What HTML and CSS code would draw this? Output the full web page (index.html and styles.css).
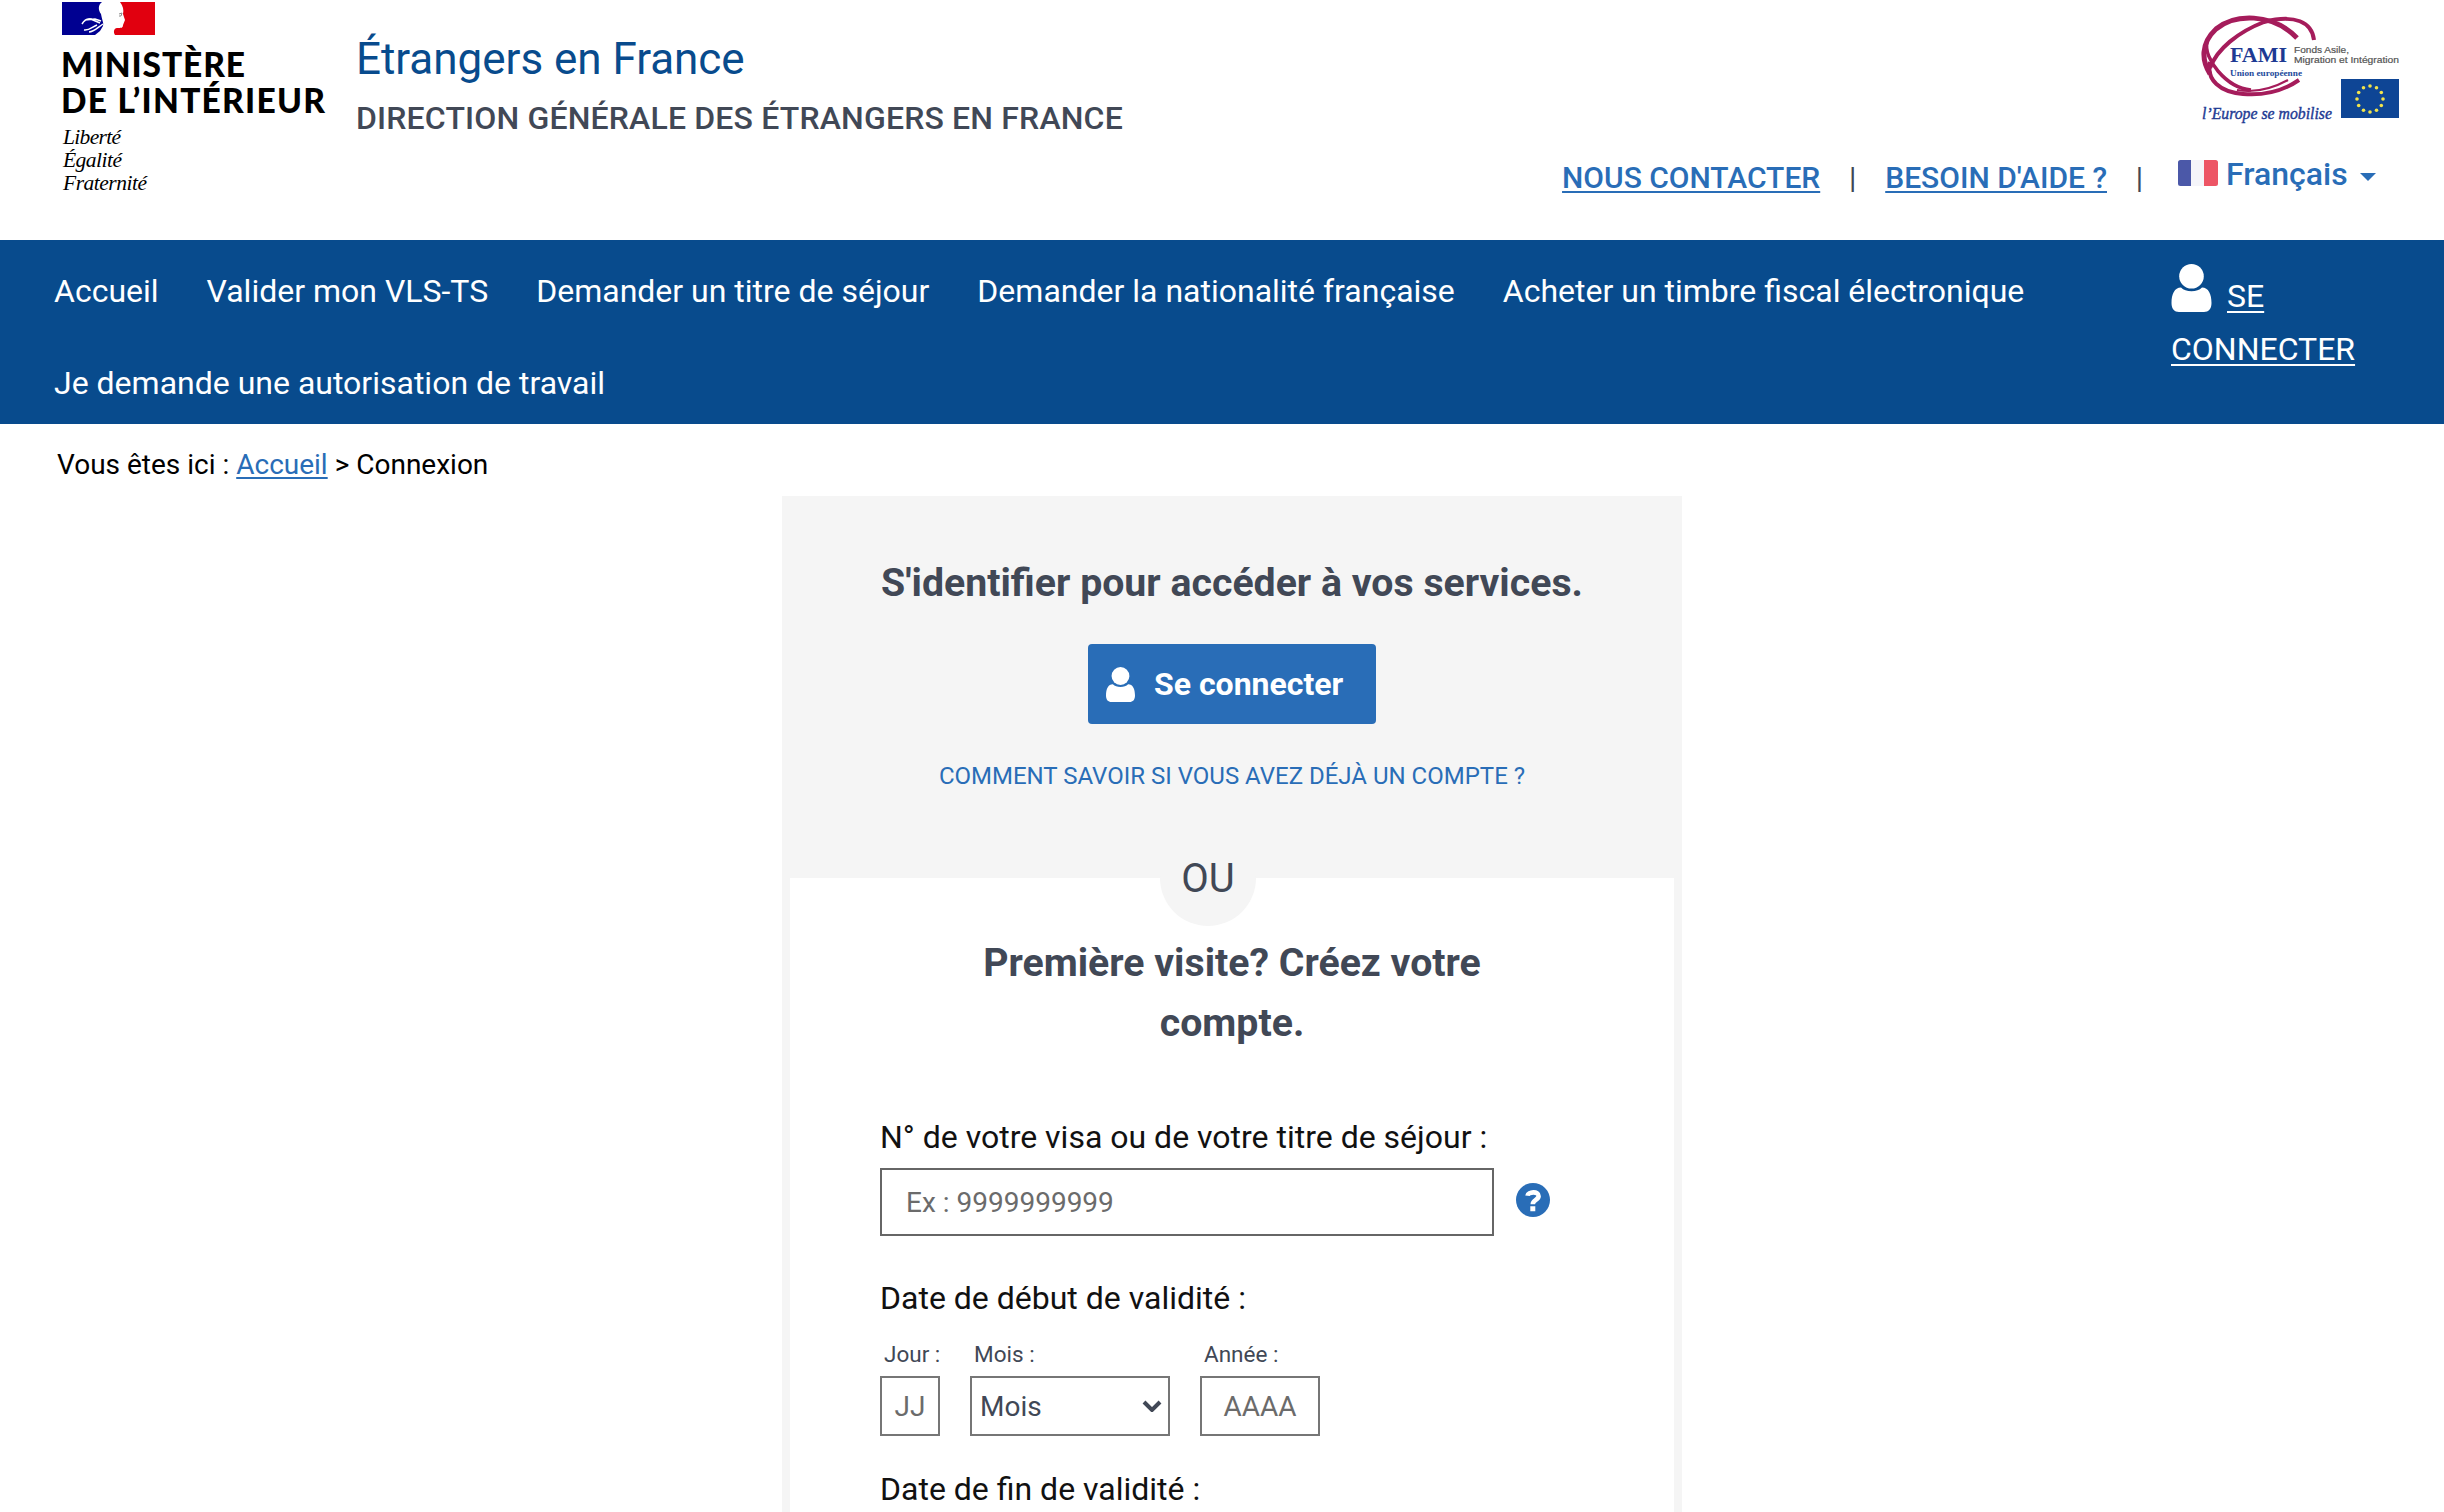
FILE: index.html
```html
<!DOCTYPE html>
<html lang="fr">
<head>
<meta charset="utf-8">
<title>Étrangers en France - Connexion</title>
<link rel="stylesheet" href="styles.css">
</head>
<body>
<svg class="sprite" aria-hidden="true">
  <symbol id="user" viewBox="0 0 40 48">
    <path d="M9.5 23.5C3 23.5 0 30 0 39c0 6 3 9 7.500 9h25c4.500 0 7.500-3 7.500-9 0-9-3-15.500-9.500-15.500C28 26 24.500 27.300 20 27.300S12 26 9.500 23.500z"/>
    <circle cx="20" cy="12.300" r="12.300"/>
  </symbol>
</svg>
<header class="header">
  <svg class="ministry" viewBox="0 0 270 200" role="img" aria-label="Ministère de l'Intérieur">
    <path fill="#000091" d="M0 2h40c-4 3-4 8-1 12 1 6 3 9 2 12l-3 5-5 4H0z"/>
    <path fill="#e1000f" d="M58 2h35v33H53c-2-3-1-7 2-7 4 0 6 0 6-3l2-5-2-6c1-4 0-8-3-12z"/>
    <path fill="none" stroke="#fff" stroke-width="1.500" d="M20 24c3-5 7-6 11-4l7 3M23 20l10-1 6 2M22 30c5 1 8-3 13-5M27 32c5 0 8-4 14-8"/>
    <path fill="none" stroke="#8a8a8a" d="M57 14l3-1-1 3h-2"/>
    <g class="ministry-name">
      <text x="-1" y="76.500" textLength="184">MINISTÈRE</text>
      <text x="-1" y="113" textLength="264">DE L’INTÉRIEUR</text>
    </g>
    <g class="motto">
      <text x="1" y="144" textLength="58">Liberté</text>
      <text x="1" y="167" textLength="59">Égalité</text>
      <text x="1" y="190" textLength="84">Fraternité</text>
    </g>
  </svg>
  <div class="titles">
    <div class="site">Étrangers en France</div>
    <div class="dept">DIRECTION GÉNÉRALE DES ÉTRANGERS EN FRANCE</div>
  </div>
  <div class="tools">
    <svg class="fami" viewBox="0 0 198 118" role="img" aria-label="FAMI Union européenne">
      <g fill="none" stroke="#a51c5b">
        <path stroke-width="5" d="M95 32C70 6 32 8 14 23C-2 38 0 55 8 68"/>
        <path stroke-width="4" d="M8 62C15 43 36 26 62 16C93 8 110 16 112 34"/>
        <path stroke-width="3.500" d="M5 36C1 52 24 82 49 84"/>
        <path stroke-width="4" d="M8 56C4 74 18 86 41 88C65 90 84 83 97 74"/>
        <path stroke-width="2" d="M35 84C57 88 75 80 86 74"/>
      </g>
      <text class="fami-name" x="28" y="56" textLength="57" lengthAdjust="spacingAndGlyphs">FAMI</text>
      <text class="fami-union" x="28" y="70" textLength="72" lengthAdjust="spacingAndGlyphs">Union européenne</text>
      <text class="fami-fund" x="92" y="46.500" textLength="55" lengthAdjust="spacingAndGlyphs">Fonds Asile,</text>
      <text class="fami-fund" x="92" y="56.500" textLength="105" lengthAdjust="spacingAndGlyphs">Migration et Intégration</text>
      <text class="fami-hand" x="0" y="112.500" textLength="130" lengthAdjust="spacingAndGlyphs">l’Europe se mobilise</text>
      <path fill="#0e4595" d="M139 73h58v39h-58z"/>
      <g fill="#f2e34c">
        <circle cx="168" cy="80" r="1.800"/><circle cx="174.500" cy="81.700" r="1.800"/><circle cx="179.300" cy="86.500" r="1.800"/>
        <circle cx="181" cy="93" r="1.800"/><circle cx="179.300" cy="99.500" r="1.800"/><circle cx="174.500" cy="104.300" r="1.800"/>
        <circle cx="168" cy="106" r="1.800"/><circle cx="161.500" cy="104.300" r="1.800"/><circle cx="156.700" cy="99.500" r="1.800"/>
        <circle cx="155" cy="93" r="1.800"/><circle cx="156.700" cy="86.500" r="1.800"/><circle cx="161.500" cy="81.700" r="1.800"/>
      </g>
    </svg>
    <div class="links">
      <a class="link" href="#">NOUS CONTACTER</a>
      <span class="bar">|</span>
      <a class="link" href="#">BESOIN D'AIDE ?</a>
      <span class="bar">|</span>
      <span class="lang">
        <svg class="flag" viewBox="0 0 40 26"><rect width="40" height="26" rx="2.500" fill="#f5f5fa"/><path fill="#4b58a8" d="M2.500 0H13v26H2.500A2.500 2.500 0 0 1 0 23.500v-21A2.500 2.500 0 0 1 2.500 0z"/><path fill="#ed5565" d="M26 0h11.500A2.500 2.500 0 0 1 40 2.500v21a2.500 2.500 0 0 1-2.500 2.500H26z"/></svg>
        <span>Français</span>
        <svg class="caret" viewBox="0 0 16 8"><path d="M0 0h16L8 8z"/></svg>
      </span>
    </div>
  </div>
</header>
<nav class="nav">
  <ul class="menu">
    <li>Accueil</li>
    <li>Valider mon VLS-TS</li>
    <li>Demander un titre de séjour</li>
    <li>Demander la nationalité française</li>
    <li>Acheter un timbre fiscal électronique</li>
    <li>Je demande une autorisation de travail</li>
  </ul>
  <div class="login"><svg class="login-icon"><use href="#user"/></svg><a class="login-link" href="#">SE CONNECTER</a></div>
</nav>
<div class="crumbs">Vous êtes ici : <a href="#">Accueil</a> &gt; Connexion</div>
<main class="panel">
  <section class="signin">
    <h1 class="heading">S'identifier pour accéder à vos services.</h1>
    <a class="button" href="#"><svg class="button-icon"><use href="#user"/></svg>Se connecter</a>
    <a class="hint" href="#">COMMENT SAVOIR SI VOUS AVEZ DÉJÀ UN COMPTE ?</a>
  </section>
  <section class="signup">
    <div class="or">OU</div>
    <h2 class="heading narrow">Première visite? Créez votre compte.</h2>
    <label class="label" for="visa">N° de votre visa ou de votre titre de séjour :</label>
    <div class="row">
      <input class="field visa" id="visa" placeholder="Ex : 9999999999">
      <svg class="help" viewBox="0 0 34 34"><circle cx="17" cy="17" r="17" fill="#296db7"/><path d="M11.500 12.800C12 8.800 22.800 7.600 22.600 13.100C22.500 17 16.800 16.800 16.800 21.300" fill="none" stroke="#fff" stroke-width="4.600"/><path d="M14.300 23.200h5v5h-5z" fill="#fff"/></svg>
    </div>
    <div class="label start">Date de début de validité :</div>
    <div class="date">
      <label class="part"><span class="small">Jour :</span><input class="field day" placeholder="JJ"></label>
      <label class="part"><span class="small">Mois :</span>
        <span class="field month">Mois<svg class="chevron" viewBox="0 0 20 12"><path d="M2 2l8 8 8-8"/></svg></span></label>
      <label class="part"><span class="small">Année :</span><input class="field year" placeholder="AAAA"></label>
    </div>
    <div class="label end">Date de fin de validité :</div>
  </section>
</main>
</body>
</html>
```
FILE: styles.css
```css
* { box-sizing: border-box; }
html, body { height: 100%; }
body { margin: 0; background: #fff; color: #414856; font-family: Roboto, sans-serif; overflow: hidden; }
.sprite { position: absolute; width: 0; height: 0; }

.header { display: flex; height: 240px; padding: 0 44px 0 62px; }
.ministry { width: 270px; height: 200px; flex: none; overflow: visible; }
.ministry-name { font: 900 33.500px Lato, sans-serif; fill: #000; }
.motto { font: italic 21.500px "Liberation Serif", serif; fill: #000; }
.titles { margin-left: 24px; padding-top: 32px; }
.site { color: #084b8d; font-size: 44px; line-height: 54px; letter-spacing: -.03px; }
.dept { margin-top: 6px; font-size: 32px; font-weight: 500; line-height: 53px; letter-spacing: .16px; }
.tools { display: flex; flex-direction: column; align-items: flex-end; margin-left: auto; }
.fami { width: 198px; height: 118px; margin-top: 6px; overflow: visible; }
.fami-name { font: bold 22px "Liberation Serif", serif; fill: #1d3a93; }
.fami-union { font: bold 9px "Liberation Serif", serif; fill: #1d4a9c; }
.fami-fund { font: 9px "Liberation Sans", sans-serif; fill: #555; stroke: #555; stroke-width: .2px; }
.fami-hand { font: italic 17px "Liberation Serif", serif; fill: #1d3a93; stroke: #1d3a93; stroke-width: .4px; }
.links { display: flex; height: 50px; margin: 27px 24px 0 0; align-items: baseline; font-size: 30px; font-weight: 500; line-height: 50px; }
.link { color: #296db7; text-decoration-thickness: 2px; text-underline-offset: 3px; }
.bar { width: 65px; text-align: center; font-weight: 400; }
.lang { display: flex; width: 198px; margin: 0 0 0 6px; align-items: center; color: #296db7; font-size: 32px; transform: translateY(-2px); }
.flag { width: 40px; height: 26px; margin: -2px 8px 0 0; }
.caret { width: 16px; height: 8px; margin: 6px 0 0 12px; fill: #296db7; }

.nav { display: flex; height: 184px; padding: 0 0 0 54px; background: #084b8d; color: #fff; font-size: 32px; }
.menu { display: flex; flex-wrap: wrap; width: 2100px; margin: 0; padding: 0; column-gap: 48px; list-style: none; }
.menu li { height: 92px; padding-top: 5px; line-height: 92px; }
.login { width: 200px; margin-left: 17px; padding-top: 24px; line-height: 53px; }
.login-icon { width: 41px; height: 48px; margin-right: 15px; fill: #fff; vertical-align: -5px; }
.login-link { color: #fff; text-decoration-thickness: 2px; text-underline-offset: 4px; }

.crumbs { height: 72px; padding: 5px 0 0 57px; color: #000; font-size: 28px; line-height: 72px; }
.crumbs a { color: #296db7; text-decoration-thickness: 2px; text-underline-offset: 3px; }

.panel { width: 900px; height: 1016px; margin-left: 782px; padding: 0 8px; background: #f5f5f5; }
.signin { display: flex; flex-direction: column; align-items: center; height: 382px; padding-top: 57px; }
.heading { margin: 0; font-size: 39.250px; font-weight: 700; line-height: 60px; text-align: center; }
.button { display: flex; width: 288px; height: 80px; margin-top: 31px; padding: 1px 0 0 18px; align-items: center; border-radius: 4px; background: #296db7; color: #fff; font-size: 32px; font-weight: 700; line-height: 79px; text-decoration: none; }
.button-icon { width: 29px; height: 35px; margin: -1px 19px 0 0; fill: #fff; }
.hint { margin-top: 32px; color: #296db7; font-size: 24px; line-height: 40px; text-decoration: none; }

.signup { position: relative; height: 634px; padding: 58px 90px 0; background: #fff; }
.or { position: absolute; top: -48px; left: 370px; width: 96px; height: 96px; border-radius: 50%; background: #f5f5f5; font-size: 40px; line-height: 98px; text-align: center; }
.narrow { width: 560px; margin: 0 auto; }
.signup .heading { margin-top: -3px; }
.label { display: block; color: #111; font-size: 32px; line-height: 48px; margin-top: 60px; }
.row { display: flex; align-items: center; margin-top: 7px; }
.field { display: block; height: 60px; margin: 0; padding: 0; border: 2px solid #767676; border-radius: 0; background: #fff; color: #414856; font: 28px Roboto, sans-serif; text-align: center; outline: 0; }
.field::placeholder { color: #6b6b6b; opacity: 1; }
.visa { width: 614px; height: 68px; padding-left: 24px; border-color: #666; text-align: left; }
.help { width: 34px; height: 34px; margin: -4px 0 0 22px; }
.start { margin-top: 38px; }
.date { display: grid; grid-template-columns: 60px 200px 120px; gap: 30px; margin-top: 14px; }
.small { display: block; height: 40px; padding-left: 4px; font-size: 22.500px; line-height: 37px; white-space: nowrap; }
.day { width: 60px; }
.month { display: flex; width: 200px; padding: 0 6px 0 8px; align-items: center; justify-content: space-between; }
.chevron { width: 20px; height: 12px; fill: none; stroke: #414856; stroke-width: 4; }
.year { width: 120px; }
.end { margin-top: 29px; }
```
